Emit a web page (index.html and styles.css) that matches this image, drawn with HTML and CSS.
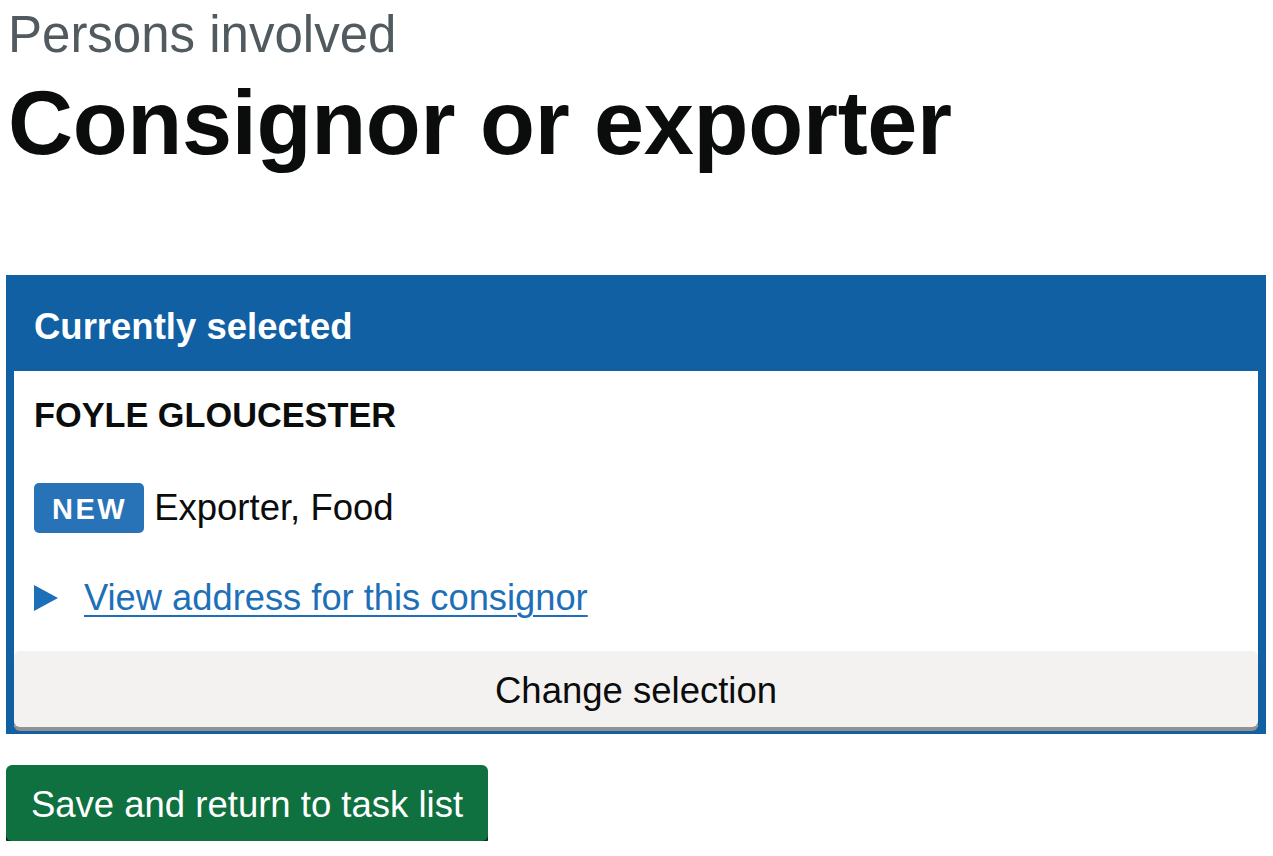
FILE: index.html
```html
<!DOCTYPE html>
<html lang="en">
<head>
<meta charset="utf-8">
<title>Consignor or exporter</title>
<link rel="stylesheet" href="styles.css">
</head>
<body>
<main class="page">
  <span class="caption">Persons involved</span>
  <h1 class="heading">Consignor or exporter</h1>

  <section class="panel">
    <h2 class="panel-title">Currently selected</h2>
    <div class="panel-body">
      <div class="panel-content">
        <p class="name">FOYLE GLOUCESTER</p>
        <p class="roles"><strong class="tag">NEW</strong><span>Exporter, Food</span></p>
        <details class="details">
          <summary class="summary"><span class="arrow"></span><span class="summary-text">View address for this consignor</span></summary>
        </details>
      </div>
      <button class="btn-secondary" type="button">Change selection</button>
    </div>
  </section>

  <button class="btn-primary" type="button">Save and return to task list</button>
</main>
</body>
</html>
```

FILE: styles.css
```css
html, body {
  margin: 0;
  padding: 0;
  background: #ffffff;
}

.page {
  font-family: "Liberation Sans", Arial, sans-serif;
  color: #0b0c0c;
  padding: 0 7px 0 6px;
}

.caption {
  display: block;
  color: #505a5f;
  font-size: 51px;
  line-height: 70px;
  padding-left: 2px;
}

.heading {
  margin: 0;
  font-size: 90px;
  font-weight: 700;
  line-height: 106px;
  letter-spacing: -0.3px;
  padding-left: 2px;
  margin-bottom: 99px;
}

.panel {
  background: #1160a3;
  padding: 0 8px 7px;
}

.panel-title {
  margin: 0 -8px;
  padding: 0 28px;
  height: 96px;
  line-height: 104px;
  color: #ffffff;
  font-size: 36.5px;
  font-weight: 700;
}

.panel-body {
  background: #ffffff;
}

.panel-content {
  padding: 24px 20px 33px;
}

.name {
  margin: 0;
  font-size: 34.3px;
  font-weight: 700;
  line-height: 40px;
}

.roles {
  margin: 48px 0 0;
  display: flex;
  align-items: center;
  gap: 10px;
  font-size: 36.5px;
  line-height: 50px;
}

.tag {
  display: inline-block;
  background: #2872b8;
  color: #ffffff;
  font-size: 29px;
  font-weight: 700;
  letter-spacing: 2.5px;
  height: 50px;
  line-height: 52px;
  padding: 0 17px 0 18px;
  border-radius: 5px;
}

.details {
  margin-top: 45px;
}

.summary {
  list-style: none;
  display: flex;
  align-items: center;
  gap: 26px;
  color: #1d70b8;
  font-size: 36.3px;
  line-height: 40px;
  cursor: pointer;
}

.summary::-webkit-details-marker {
  display: none;
}

.arrow {
  width: 0;
  height: 0;
  border-top: 13px solid transparent;
  border-bottom: 13px solid transparent;
  border-left: 24px solid #1d70b8;
}

.summary-text {
  text-decoration: underline;
  text-decoration-thickness: 2px;
  text-underline-offset: 5px;
}

.btn-secondary {
  display: block;
  width: 100%;
  height: 76px;
  border: 0;
  border-radius: 6px;
  background: #f3f2f1;
  box-shadow: 0 4px 0 #929191;
  font-family: "Liberation Sans", Arial, sans-serif;
  font-size: 36.5px;
  color: #0b0c0c;
  padding: 3px 0 0;
}

.btn-primary {
  display: block;
  margin-top: 31px;
  height: 76px;
  width: 482px;
  border: 0;
  border-radius: 6px;
  background: #0f7040;
  box-shadow: 0 4px 0 #002d18;
  color: #ffffff;
  font-family: "Liberation Sans", Arial, sans-serif;
  font-size: 36.5px;
  padding: 3px 0 0;
}
```
